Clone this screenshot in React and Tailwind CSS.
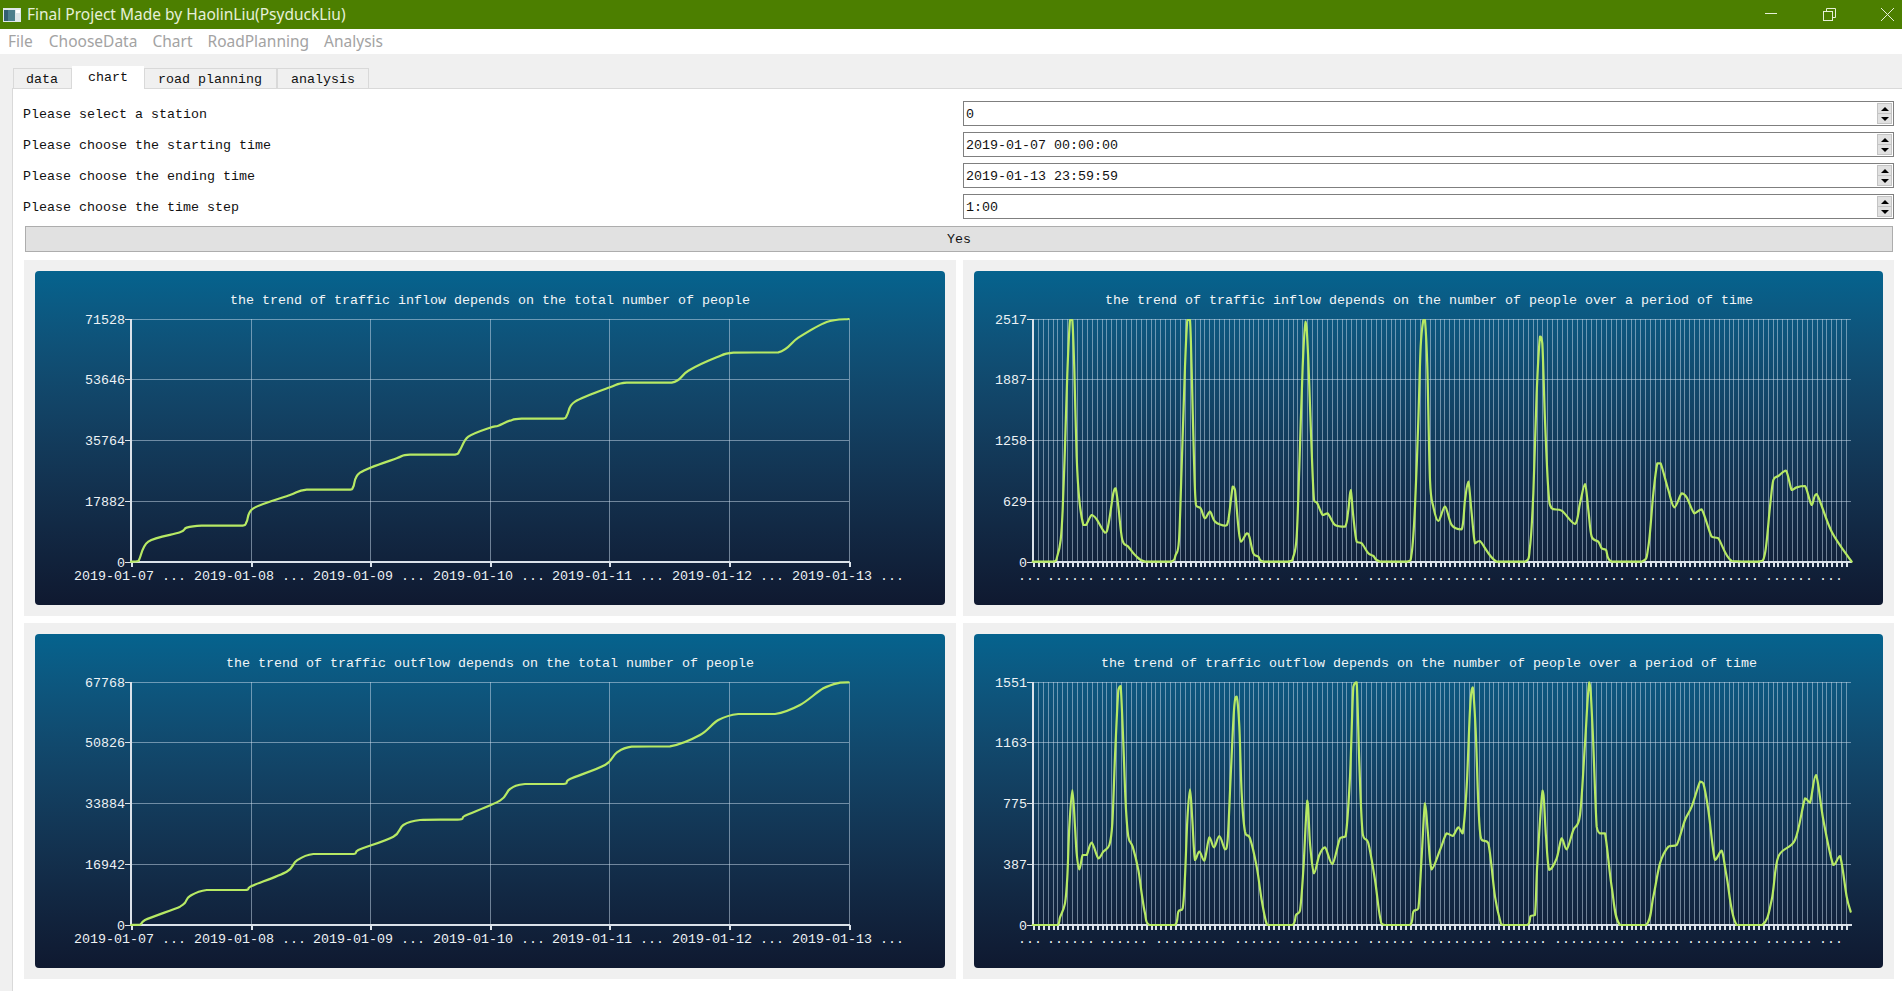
import React from 'react';

// zoom-crop coords (3x) -> coords inside a chart card
const pts = (dx, dy, list) => list.map(([x, y]) => [dx + x / 3, dy + y / 3]);

// catmull-rom through the points, control points kept inside each segment's box
function smooth(p) {
  const clamp = (v, a, b) => Math.min(Math.max(a, b), Math.max(Math.min(a, b), v));
  let d = `M${p[0][0]} ${p[0][1]}`;
  for (let i = 0; i < p.length - 1; i++) {
    const a = p[i - 1] || p[i];
    const b = p[i];
    const c = p[i + 1];
    const e = p[i + 2] || c;
    const c1x = clamp(b[0] + (c[0] - a[0]) / 6, b[0], c[0]);
    const c2x = clamp(c[0] - (e[0] - b[0]) / 6, b[0], c[0]);
    const c1y = clamp(b[1] + (c[1] - a[1]) / 6, b[1], c[1]);
    const c2y = clamp(c[1] - (e[1] - b[1]) / 6, b[1], c[1]);
    d += `C${c1x} ${c1y} ${c2x} ${c2y} ${c[0]} ${c[1]}`;
  }
  return d;
}

const inflowTotal = [
  ...pts(-15, -11, [[333,905],[355,903],[385,845],[480,817],[500,803],[545,797],[668,797],[680,785],[700,745],[810,705],[860,689],[990,689],[1000,680],[1020,638],[1130,595],[1170,584],[1305,584],[1320,570],[1345,530],[1410,503]]),
  ...pts(445, -11, [[55,497],[90,482],[125,476],[250,476],[262,463],[285,425],[390,382],[440,368],[575,368],[625,332],[710,292],[760,278],[895,277],[955,233],[1040,186],[1106,177]]),
];

const outflowTotal = [
  ...pts(-15, -4, [[333,885],[360,884],[375,870],[480,830],[495,818],[510,798],[560,780],[675,780],[695,768],[800,725],[830,692],[880,672],[1000,672],[1015,660],[1120,620],[1150,585],[1200,570],[1320,568],[1335,557]]),
  ...pts(445, -4, [[60,512],[90,477],[135,462],[250,462],[270,447],[375,405],[410,368],[455,350],[570,349],[660,315],[715,270],[775,252],[885,252],[960,225],[1030,175],[1080,158],[1106,157]]),
];

const inflowStep = [
  ...pts(-14, -11, [[218,905],[280,905],[292,888],[302,840],[308,750],[315,560],[322,340],[330,180],[337,180],[343,330],[350,590],[358,720],[370,795],[378,795],[395,765],[410,778],[435,818],[445,795],[460,700],[467,685],[475,740],[487,840],[505,860],[525,885],[555,905],[632,905],[647,885],[657,840],[665,620],[675,320],[682,180],[690,180],[695,330],[702,600],[708,735],[722,745],[735,775],[750,755],[765,785],[795,797],[805,780],[818,680],[825,690],[835,800],[843,845],[860,820],[868,830],[880,880],[895,890],[910,905],[985,905],[1000,890],[1010,830],[1018,620],[1028,320],[1037,185],[1045,300],[1053,520],[1062,720],[1072,730],[1088,765],[1103,760],[1125,795],[1155,800],[1165,750],[1172,690],[1180,770],[1190,845],[1205,850],[1225,880],[1240,888],[1260,905],[1340,905],[1355,880],[1365,740],[1375,480],[1382,260],[1390,180],[1395,180],[1402,320],[1410,660],[1420,740]]),
  ...pts(446, -11, [[55,783],[75,740],[95,795],[125,808],[135,720],[145,665],[155,760],[165,850],[180,843],[230,905],[315,905],[330,860],[340,700],[350,400],[360,230],[367,250],[375,480],[385,690],[395,745],[425,752],[465,792],[480,730],[495,672],[505,750],[515,830],[535,845],[545,865],[558,870],[575,905],[665,905],[685,860],[700,700],[712,610],[722,610],[745,690],[763,742],[785,700],[800,712],[823,760],[845,748],[875,830],[895,835],[935,903],[1015,905],[1035,880],[1050,740],[1060,660],[1075,648],[1098,632],[1115,690],[1130,682],[1155,678],[1175,735],[1190,702],[1235,815],[1295,905]]),
];

const outflowStep = [
  ...pts(-14, -4, [[218,885],[293,885],[300,862],[315,820],[322,740],[328,590],[337,480],[345,590],[350,670],[358,718],[368,675],[380,675],[395,638],[415,685],[430,665],[448,645],[457,580],[465,380],[475,180],[482,168],[490,340],[497,520],[505,620],[518,650],[535,720],[545,790],[555,850],[568,885],[645,885],[655,845],[668,835],[675,740],[682,570],[690,478],[697,570],[705,690],[718,665],[733,692],[748,622],[762,652],[778,618],[795,658],[803,630],[812,440],[822,240],[830,200],[838,290],[845,490],[855,605],[870,625],[890,710],[905,810],[918,875],[925,885],[997,885],[1008,855],[1020,842],[1030,720],[1042,512],[1050,640],[1062,730],[1078,675],[1095,652],[1117,702],[1140,625],[1157,618],[1170,440],[1180,170],[1190,157],[1198,400],[1208,610],[1225,640],[1245,750],[1260,860],[1275,885],[1350,885],[1360,845],[1375,835],[1385,680],[1395,520],[1403,600],[1415,718]]),
  ...pts(446, -4, [[60,660],[80,610],[98,618],[115,592],[128,610],[140,470],[150,240],[158,172],[167,300],[175,520],[183,625],[205,640],[225,800],[240,870],[250,885],[322,885],[332,858],[345,855],[352,700],[368,482],[378,620],[388,720],[410,685],[425,625],[440,658],[460,600],[480,555],[495,340],[508,157],[518,300],[530,590],[540,610],[555,610],[575,770],[600,885],[678,885],[700,800],[720,700],[745,650],[770,645],[795,570],[815,530],[840,455],[850,460],[865,540],[885,690],[905,662],[920,740],[950,885],[1027,885],[1055,810],[1075,680],[1125,630],[1155,505],[1170,518],[1188,435],[1210,570],[1240,705],[1260,678],[1280,800],[1292,845]]),
];

const gridY = [48, 108, 169, 230, 291];
const dates = ['07', '08', '09', '10', '11', '12', '13'];
const dayX = [96, 216, 335, 455, 574, 694, 814];
const hourX = Array.from({ length: 167 }, (_, i) => Math.round(59 + i * 4.898));
// elided category labels on the hourly charts: [start x, dots]
const dotGroups = [[44,3],[73,6],[126,6],[181,9],[260,6],[314,9],[393,6],[447,9],[525,6],[580,9],[659,6],[713,9],[791,6],[845,3]];

function Chart({ title, yLabels, left, right, xs, daily, data }) {
  const grid = 'rgba(205,222,238,0.5)';
  const axis = '#dbe2ea';
  return (
    <div className="h-full rounded-[4px] bg-linear-to-b from-[#05638e] to-[#0f1930]">
      <svg width="100%" height="334" className="block text-[13.33px]">
        <text x="455" y="33" textAnchor="middle" fill="#f2f5f7">{title}</text>
        <g shapeRendering="crispEdges">
          {gridY.map((y) => <line key={y} x1={left} x2={right} y1={y} y2={y} stroke={grid} />)}
          {xs.map((x) => <line key={x} x1={x + 0.5} x2={x + 0.5} y1="48" y2="291" stroke={grid} />)}
          {gridY.map((y) => <line key={y} x1={left - 6} x2={left} y1={y + 0.5} y2={y + 0.5} stroke={axis} />)}
          {xs.map((x) => <line key={x} x1={x + 1} x2={x + 1} y1="291" y2="296" stroke={axis} strokeWidth="2" />)}
          <line x1={left} x2={left} y1="48" y2="292" stroke={axis} strokeWidth="2" />
          <line x1={left} x2={right + 1} y1="291" y2="291" stroke={axis} strokeWidth="2" />
        </g>
        {yLabels.map((label, i) => (
          <text key={label} x={left - 6} y={gridY[i] + 5} textAnchor="end" fill="#eef2f5">{label}</text>
        ))}
        {daily
          ? dates.map((d, i) => (
              <text key={d} x={dayX[i] - 1} y="309" textAnchor="middle" fill="#eef2f5">{`2019-01-${d} ...`}</text>
            ))
          : dotGroups.map(([x, n]) => (
              <text key={x} x={x} y="309" fill="#eef2f5">{'.'.repeat(n)}</text>
            ))}
        <path d={smooth(data)} fill="none" stroke="#b7e964" strokeWidth="2.2" strokeLinejoin="round" strokeLinecap="round" />
      </svg>
    </div>
  );
}

function Spin({ value }) {
  return (
    <div className="flex h-[25px] items-center border border-[#7f7f7f] bg-white pl-[2px] pr-[1px]">
      <span className="flex-1 translate-y-px">{value}</span>
      <div className="flex flex-col">
        <div className="flex h-[11px] w-[15px] items-center justify-center border border-[#c4c4c4] bg-[#e1e1e1]">
          <div className="h-0 w-0 border-x-[4px] border-b-[4px] border-x-transparent border-b-black" />
        </div>
        <div className="-mt-px flex h-[11px] w-[15px] items-center justify-center border border-[#c4c4c4] bg-[#e1e1e1]">
          <div className="h-0 w-0 border-x-[4px] border-t-[4px] border-x-transparent border-t-black" />
        </div>
      </div>
    </div>
  );
}

const form = [
  ['Please select a station', '0'],
  ['Please choose the starting time', '2019-01-07 00:00:00'],
  ['Please choose the ending time', '2019-01-13 23:59:59'],
  ['Please choose the time step', '1:00'],
];

const menu = [
  ['File', 'ml-2'],
  ['ChooseData', 'ml-4'],
  ['Chart', 'ml-[15px]'],
  ['RoadPlanning', 'ml-[15px]'],
  ['Analysis', 'ml-[15px]'],
];

const tabs = [
  ['data', 'w-[59px] pr-px'],
  ['chart', 'w-[72px]'],
  ['road planning', 'w-[133px] pr-px'],
  ['analysis', 'w-[92px]'],
];

export default function App() {
  return (
    <div className="flex h-[991px] flex-col overflow-hidden bg-[#f0f0f0] font-['Liberation_Mono',monospace] text-[13.33px] text-[#111]">
      {/* title bar */}
      <div className="flex h-[29px] items-center bg-[#4c7f00] font-['Noto_Sans',sans-serif] text-[15.5px] text-[#e6f0d8]">
        <svg width="18" height="14" className="ml-[3px] mr-[6px]">
          <rect width="18" height="14" fill="#dfe7ea" />
          <rect x="1" y="2" width="11" height="11" fill="#4d7f8c" />
          <rect x="1" y="2" width="4" height="11" fill="#335f72" />
          <rect x="13" y="2" width="4" height="3" fill="#fff" />
        </svg>
        <span>Final Project Made by HaolinLiu(PsyduckLiu)</span>
        <svg width="140" height="29" className="ml-auto" stroke="#e6f0d8" fill="none">
          <line x1="3" x2="15" y1="13.5" y2="13.5" />
          <rect x="61.5" y="11.5" width="9" height="9" />
          <path d="M64.5 11.5V8.5H73.5V17.5H70.5" />
          <path d="M119 8L132 21M132 8L119 21" />
        </svg>
      </div>

      {/* menu bar */}
      <div className="flex h-[25px] items-center bg-white pt-px font-['Noto_Sans',sans-serif] text-[15.5px] text-[#a3a3a3]">
        {menu.map(([name, cls]) => <span key={name} className={cls}>{name}</span>)}
      </div>

      {/* tabs */}
      <div className="ml-[13px] mt-3 flex h-[22px] items-end">
        {tabs.map(([name, cls]) =>
          name === 'chart' ? (
            <div key={name} className={`${cls} relative z-10 -mb-px flex h-[23px] items-center justify-center bg-white pt-px`}>{name}</div>
          ) : (
            <div key={name} className={`${cls} flex h-5 items-center justify-center border border-b-0 border-[#d9d9d9] pt-[2px]`}>{name}</div>
          )
        )}
      </div>

      {/* tab pane */}
      <div className="ml-3 flex-1 border-l border-t border-[#d9d9d9] bg-white pl-[11px] pr-2 pt-3">
        <div className="grid grid-cols-[939px_931px] gap-y-[6px]">
          {form.map(([label, value]) => (
            <React.Fragment key={label}>
              <div className="flex -translate-x-px translate-y-px items-center">{label}</div>
              <Spin value={value} />
            </React.Fragment>
          ))}
        </div>

        <div className="ml-px mt-[7px] flex h-[26px] w-[1868px] items-center justify-center border border-[#adadad] bg-[#e1e1e1] pt-px">Yes</div>

        <div className="mt-2 grid grid-cols-[932px_931px] grid-rows-[356px_356px] gap-[7px]">
          <div className="bg-[#f0f0f0] p-[11px]">
            <Chart title="the trend of traffic inflow depends on the total number of people" yLabels={['71528', '53646', '35764', '17882', '0']} left={96} right={814} xs={dayX} daily data={inflowTotal} />
          </div>
          <div className="bg-[#f0f0f0] p-[11px]">
            <Chart title="the trend of traffic inflow depends on the number of people over a period of time" yLabels={['2517', '1887', '1258', '629', '0']} left={59} right={877} xs={hourX} data={inflowStep} />
          </div>
          <div className="bg-[#f0f0f0] p-[11px]">
            <Chart title="the trend of traffic outflow depends on the total number of people" yLabels={['67768', '50826', '33884', '16942', '0']} left={96} right={814} xs={dayX} daily data={outflowTotal} />
          </div>
          <div className="bg-[#f0f0f0] p-[11px]">
            <Chart title="the trend of traffic outflow depends on the number of people over a period of time" yLabels={['1551', '1163', '775', '387', '0']} left={59} right={877} xs={hourX} data={outflowStep} />
          </div>
        </div>
      </div>
    </div>
  );
}
